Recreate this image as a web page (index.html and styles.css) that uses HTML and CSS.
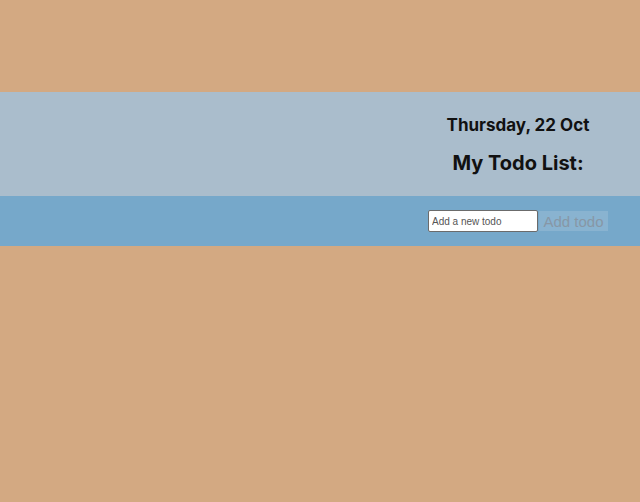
FILE: index.html
```html
<!DOCTYPE html>
<html>
<head>
<meta charset="utf-8">
<link rel="stylesheet" href="styles.css">
</head>
<body>
<div class="spacer"></div>
<header class="header">
  <div class="title-col">
    <h2 class="date">Thursday, 22 Oct</h2>
    <h1 class="title">My Todo List:</h1>
  </div>
</header>
<div class="form-bar">
  <form class="todo-form">
    <input class="todo-input" type="text" placeholder="Add a new todo">
    <button class="add-btn" type="button">Add todo</button>
  </form>
</div>
</body>
</html>
```
FILE: styles.css
```css
html, body {
  margin: 0;
  padding: 0;
  height: 100%;
  background: #d3a982;
  font-family: Inter, "Liberation Sans", Arial, sans-serif;
}
.spacer {
  height: 92px;
}
.header {
  height: 104px;
  background: #aabdcc;
  display: flex;
  justify-content: flex-end;
}
.title-col {
  width: 244px;
  text-align: center;
}
.date {
  margin: 22px 0 0;
  font-size: 17px;
  font-weight: 700;
  color: #111;
  line-height: 22px;
}
.title {
  margin: 13px 0 0;
  font-size: 20px;
  font-weight: 700;
  color: #111;
  line-height: 28px;
}
.form-bar {
  height: 50px;
  background: #76a8ca;
  display: flex;
  justify-content: flex-end;
  align-items: center;
  padding-right: 32px;
}
.todo-form {
  display: flex;
  align-items: center;
}
.todo-input {
  box-sizing: border-box;
  width: 110px;
  height: 22px;
  margin: 0;
  padding: 0 3px;
  border: 1px solid #6b6b6b;
  border-radius: 2px;
  font-family: "Liberation Sans", Arial, sans-serif;
  font-size: 10px;
  background: #fff;
}
.todo-input::placeholder {
  color: #555;
}
.add-btn {
  box-sizing: border-box;
  width: 69px;
  height: 20px;
  margin: 0 0 0 1px;
  padding: 0;
  border: none;
  background: #89b3d0;
  color: #8797a6;
  font-family: "Liberation Sans", Arial, sans-serif;
  font-size: 15px;
}
```
